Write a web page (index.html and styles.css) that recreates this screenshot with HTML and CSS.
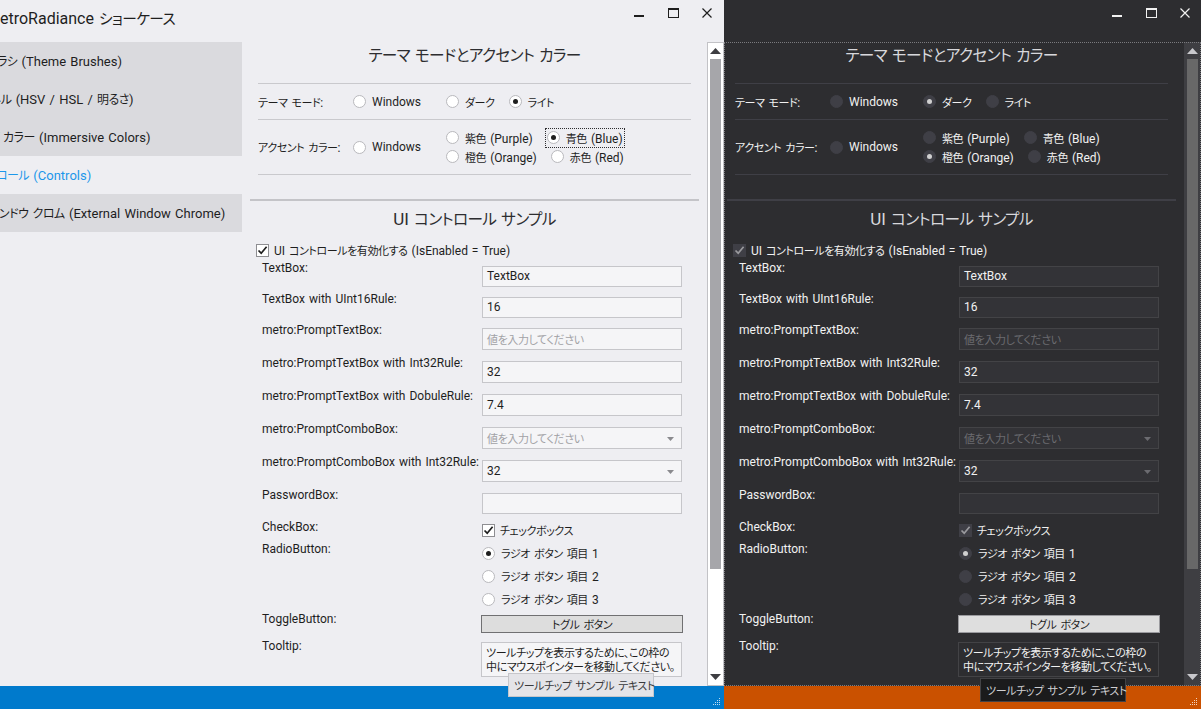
FILE: index.html
```html
<!DOCTYPE html>
<html lang="ja">
<head>
<meta charset="utf-8">
<title>MetroRadiance ショーケース</title>
<link rel="stylesheet" href="styles.css">
</head>
<body>
<div class="desk">
  <!-- LIGHT WINDOW -->
  <div class="win light">
    <div class="titlebar">
      <div class="title">MetroRadiance <span class="ja">ショーケース</span></div>
      <div class="caps">
        <div class="cap"><svg width="10" height="10" viewBox="0 0 10 10"><rect x="0" y="7" width="10" height="2" fill="currentColor"/></svg></div>
        <div class="cap"><svg width="11" height="10" viewBox="0 0 11 10"><rect x="0.5" y="1" width="10" height="8.5" fill="none" stroke="currentColor"/><rect x="0" y="0" width="11" height="2" fill="currentColor"/></svg></div>
        <div class="cap"><svg width="10" height="10" viewBox="0 0 10 10"><path d="M0.5 0.5L9.5 9.5M9.5 0.5L0.5 9.5" stroke="currentColor" stroke-width="1.2" fill="none"/></svg></div>
      </div>
    </div>
    <div class="body">
      <nav class="side">
        <div class="nav-item"><span class="nt n1"><span class="ja">テーマ ブラシ</span> (Theme Brushes)</span></div>
        <div class="nav-item"><span class="nt n2"><span class="ja">カラー パネル</span> (HSV / HSL / <span class="ja">明るさ</span>)</span></div>
        <div class="nav-item"><span class="nt n3"><span class="ja">イマーシブ カラー</span> (Immersive Colors)</span></div>
        <div class="nav-item sel"><span class="nt n4">UI <span class="ja">コントロール</span> (Controls)</span></div>
        <div class="nav-item"><span class="nt n5"><span class="ja">外部ウィンドウ クロム</span> (External Window Chrome)</span></div>
      </nav>
      <div class="main">
        <div class="pane">
          <section class="sec1">
            <h2 class="sec-title"><span class="ja">テーマ モードとアクセント カラー</span></h2>
            <div class="rule"></div>
            <div class="opt-row r1">
              <span class="opt-label"><span class="ja">テーマ モード</span>:</span>
              <span class="radio col1"><i class="rb"></i><span class="rt">Windows</span></span>
              <span class="radio"><i class="rb"></i><span class="rt"><span class="ja">ダーク</span></span></span>
              <span class="radio on"><i class="rb"></i><span class="rt"><span class="ja">ライト</span></span></span>
            </div>
            <div class="rule"></div>
            <div class="opt-row r2">
              <span class="opt-label"><span class="ja">アクセント カラー</span>:</span>
              <span class="radio col1"><i class="rb"></i><span class="rt">Windows</span></span>
              <div class="accents">
                <div class="acc-line">
                  <span class="radio"><i class="rb"></i><span class="rt"><span class="ja">紫色</span> (Purple)</span></span>
                  <span class="radio on focus"><i class="rb"></i><span class="rt"><span class="ja">青色</span> (Blue)</span></span>
                </div>
                <div class="acc-line">
                  <span class="radio"><i class="rb"></i><span class="rt"><span class="ja">橙色</span> (Orange)</span></span>
                  <span class="radio"><i class="rb"></i><span class="rt"><span class="ja">赤色</span> (Red)</span></span>
                </div>
              </div>
            </div>
            <div class="rule"></div>
          </section>
          <div class="sec2-rule"></div>
          <h2 class="sec-title sec2-title">UI <span class="ja">コントロール サンプル</span></h2>
          <div class="enable"><i class="cb"><svg width="11" height="11" viewBox="0 0 11 11"><path d="M1.5 5.5L4.2 8.2L9.6 1.8" fill="none" stroke="currentColor" stroke-width="1.7"/></svg></i><span class="rt">UI <span class="ja">コントロールを有効化する</span> (IsEnabled = True)</span></div>
          <div class="form">
            <div class="frow p31"><span class="lbl">TextBox:</span><div class="ctl tb">TextBox</div></div>
            <div class="frow p31"><span class="lbl">TextBox with UInt16Rule:</span><div class="ctl tb">16</div></div>
            <div class="frow p33"><span class="lbl">metro:PromptTextBox:</span><div class="ctl tb h22 ph"><span class="ja">値を入力してください</span></div></div>
            <div class="frow p33"><span class="lbl">metro:PromptTextBox with Int32Rule:</span><div class="ctl tb h22">32</div></div>
            <div class="frow p33"><span class="lbl">metro:PromptTextBox with DobuleRule:</span><div class="ctl tb h22">7.4</div></div>
            <div class="frow p33"><span class="lbl">metro:PromptComboBox:</span><div class="ctl tb h22 combo ph"><span class="ja">値を入力してください</span><svg class="arr" width="7" height="4" viewBox="0 0 7 4"><path d="M0 0H7L3.5 4Z" fill="currentColor"/></svg></div></div>
            <div class="frow p33"><span class="lbl">metro:PromptComboBox with Int32Rule:</span><div class="ctl tb h22 combo">32<svg class="arr" width="7" height="4" viewBox="0 0 7 4"><path d="M0 0H7L3.5 4Z" fill="currentColor"/></svg></div></div>
            <div class="frow p32"><span class="lbl">PasswordBox:</span><div class="ctl tb"></div></div>
            <div class="frow cbrow"><span class="lbl">CheckBox:</span><div class="ctl chk"><i class="cb"><svg width="11" height="11" viewBox="0 0 11 11"><path d="M1.5 5.5L4.2 8.2L9.6 1.8" fill="none" stroke="currentColor" stroke-width="1.7"/></svg></i><span class="rt"><span class="ja">チェックボックス</span></span></div></div>
            <div class="frow rbrow"><span class="lbl">RadioButton:</span>
              <div class="ctl rlist">
                <span class="radio on"><i class="rb"></i><span class="rt"><span class="ja">ラジオ ボタン 項目</span> 1</span></span>
                <span class="radio"><i class="rb"></i><span class="rt"><span class="ja">ラジオ ボタン 項目</span> 2</span></span>
                <span class="radio"><i class="rb"></i><span class="rt"><span class="ja">ラジオ ボタン 項目</span> 3</span></span>
              </div>
            </div>
            <div class="frow tgrow"><span class="lbl">ToggleButton:</span><div class="ctl toggle"><span class="ja">トグル ボタン</span></div></div>
            <div class="frow ttrow"><span class="lbl">Tooltip:</span><div class="ctl ttbox"><span class="ja">ツールチップを表示するために、この枠の<br>中にマウスポインターを移動してください。</span></div></div>
          </div>
        </div>
        <div class="vscroll">
          <div class="sb-btn"><svg width="11" height="6" viewBox="0 0 11 6"><path d="M5.5 0L11 6H0Z" fill="currentColor"/></svg></div>
          <div class="sb-track"><div class="sb-thumb"></div></div>
          <div class="sb-btn"><svg width="11" height="6" viewBox="0 0 11 6"><path d="M0 0H11L5.5 6Z" fill="currentColor"/></svg></div>
        </div>
      </div>
    </div>
    <div class="status">
      <svg class="grip" width="7" height="7" viewBox="0 0 7 7"><g fill="currentColor"><rect x="6" y="0" width="1" height="1"/><rect x="4" y="2" width="1" height="1"/><rect x="6" y="2" width="1" height="1"/><rect x="2" y="4" width="1" height="1"/><rect x="4" y="4" width="1" height="1"/><rect x="6" y="4" width="1" height="1"/><rect x="0" y="6" width="1" height="1"/><rect x="2" y="6" width="1" height="1"/><rect x="4" y="6" width="1" height="1"/><rect x="6" y="6" width="1" height="1"/></g></svg>
    </div>
    <div class="tip"><span class="ja">ツールチップ サンプル テキスト</span></div>
  </div>

  <!-- DARK WINDOW -->
  <div class="win dark">
    <div class="titlebar">
      <div class="title"></div>
      <div class="caps">
        <div class="cap"><svg width="10" height="10" viewBox="0 0 10 10"><rect x="0" y="7" width="10" height="2" fill="currentColor"/></svg></div>
        <div class="cap"><svg width="11" height="10" viewBox="0 0 11 10"><rect x="0.5" y="1" width="10" height="8.5" fill="none" stroke="currentColor"/><rect x="0" y="0" width="11" height="2" fill="currentColor"/></svg></div>
        <div class="cap"><svg width="10" height="10" viewBox="0 0 10 10"><path d="M0.5 0.5L9.5 9.5M9.5 0.5L0.5 9.5" stroke="currentColor" stroke-width="1.2" fill="none"/></svg></div>
      </div>
    </div>
    <div class="body">
      <div class="main">
        <div class="pane">
          <section class="sec1">
            <h2 class="sec-title"><span class="ja">テーマ モードとアクセント カラー</span></h2>
            <div class="rule"></div>
            <div class="opt-row r1">
              <span class="opt-label"><span class="ja">テーマ モード</span>:</span>
              <span class="radio col1"><i class="rb"></i><span class="rt">Windows</span></span>
              <span class="radio on"><i class="rb"></i><span class="rt"><span class="ja">ダーク</span></span></span>
              <span class="radio"><i class="rb"></i><span class="rt"><span class="ja">ライト</span></span></span>
            </div>
            <div class="rule"></div>
            <div class="opt-row r2">
              <span class="opt-label"><span class="ja">アクセント カラー</span>:</span>
              <span class="radio col1"><i class="rb"></i><span class="rt">Windows</span></span>
              <div class="accents">
                <div class="acc-line">
                  <span class="radio"><i class="rb"></i><span class="rt"><span class="ja">紫色</span> (Purple)</span></span>
                  <span class="radio"><i class="rb"></i><span class="rt"><span class="ja">青色</span> (Blue)</span></span>
                </div>
                <div class="acc-line">
                  <span class="radio on"><i class="rb"></i><span class="rt"><span class="ja">橙色</span> (Orange)</span></span>
                  <span class="radio"><i class="rb"></i><span class="rt"><span class="ja">赤色</span> (Red)</span></span>
                </div>
              </div>
            </div>
            <div class="rule"></div>
          </section>
          <div class="sec2-rule"></div>
          <h2 class="sec-title sec2-title">UI <span class="ja">コントロール サンプル</span></h2>
          <div class="enable"><i class="cb"><svg width="11" height="11" viewBox="0 0 11 11"><path d="M1.5 5.5L4.2 8.2L9.6 1.8" fill="none" stroke="currentColor" stroke-width="1.7"/></svg></i><span class="rt">UI <span class="ja">コントロールを有効化する</span> (IsEnabled = True)</span></div>
          <div class="form">
            <div class="frow p31"><span class="lbl">TextBox:</span><div class="ctl tb">TextBox</div></div>
            <div class="frow p31"><span class="lbl">TextBox with UInt16Rule:</span><div class="ctl tb">16</div></div>
            <div class="frow p33"><span class="lbl">metro:PromptTextBox:</span><div class="ctl tb h22 ph"><span class="ja">値を入力してください</span></div></div>
            <div class="frow p33"><span class="lbl">metro:PromptTextBox with Int32Rule:</span><div class="ctl tb h22">32</div></div>
            <div class="frow p33"><span class="lbl">metro:PromptTextBox with DobuleRule:</span><div class="ctl tb h22">7.4</div></div>
            <div class="frow p33"><span class="lbl">metro:PromptComboBox:</span><div class="ctl tb h22 combo ph"><span class="ja">値を入力してください</span><svg class="arr" width="7" height="4" viewBox="0 0 7 4"><path d="M0 0H7L3.5 4Z" fill="currentColor"/></svg></div></div>
            <div class="frow p33"><span class="lbl">metro:PromptComboBox with Int32Rule:</span><div class="ctl tb h22 combo">32<svg class="arr" width="7" height="4" viewBox="0 0 7 4"><path d="M0 0H7L3.5 4Z" fill="currentColor"/></svg></div></div>
            <div class="frow p32"><span class="lbl">PasswordBox:</span><div class="ctl tb"></div></div>
            <div class="frow cbrow"><span class="lbl">CheckBox:</span><div class="ctl chk"><i class="cb"><svg width="11" height="11" viewBox="0 0 11 11"><path d="M1.5 5.5L4.2 8.2L9.6 1.8" fill="none" stroke="currentColor" stroke-width="1.7"/></svg></i><span class="rt"><span class="ja">チェックボックス</span></span></div></div>
            <div class="frow rbrow"><span class="lbl">RadioButton:</span>
              <div class="ctl rlist">
                <span class="radio on"><i class="rb"></i><span class="rt"><span class="ja">ラジオ ボタン 項目</span> 1</span></span>
                <span class="radio"><i class="rb"></i><span class="rt"><span class="ja">ラジオ ボタン 項目</span> 2</span></span>
                <span class="radio"><i class="rb"></i><span class="rt"><span class="ja">ラジオ ボタン 項目</span> 3</span></span>
              </div>
            </div>
            <div class="frow tgrow"><span class="lbl">ToggleButton:</span><div class="ctl toggle"><span class="ja">トグル ボタン</span></div></div>
            <div class="frow ttrow"><span class="lbl">Tooltip:</span><div class="ctl ttbox"><span class="ja">ツールチップを表示するために、この枠の<br>中にマウスポインターを移動してください。</span></div></div>
          </div>
        </div>
        <div class="vscroll">
          <div class="sb-btn"><svg width="11" height="6" viewBox="0 0 11 6"><path d="M5.5 0L11 6H0Z" fill="currentColor"/></svg></div>
          <div class="sb-track"><div class="sb-thumb"></div></div>
          <div class="sb-btn"><svg width="11" height="6" viewBox="0 0 11 6"><path d="M0 0H11L5.5 6Z" fill="currentColor"/></svg></div>
        </div>
      </div>
    </div>
    <div class="status">
      <svg class="grip" width="7" height="7" viewBox="0 0 7 7"><g fill="currentColor"><rect x="6" y="0" width="1" height="1"/><rect x="4" y="2" width="1" height="1"/><rect x="6" y="2" width="1" height="1"/><rect x="2" y="4" width="1" height="1"/><rect x="4" y="4" width="1" height="1"/><rect x="6" y="4" width="1" height="1"/><rect x="0" y="6" width="1" height="1"/><rect x="2" y="6" width="1" height="1"/><rect x="4" y="6" width="1" height="1"/><rect x="6" y="6" width="1" height="1"/></g></svg>
    </div>
    <div class="tip"><span class="ja">ツールチップ サンプル テキスト</span></div>
  </div>
</div>
</body>
</html>
```

FILE: styles.css
```css
* { box-sizing: border-box; }
html, body { margin: 0; padding: 0; }
body {
  width: 1201px;
  height: 709px;
  overflow: hidden;
  font-family: Roboto, "Noto Sans CJK JP", sans-serif;
  font-size: 12px;
  font-feature-settings: "palt";
  word-spacing: 1px;
  background: #2d2d30;
}
.ja {
  font-family: "Noto Sans CJK JP", sans-serif;
  font-size: 0.92em;
  letter-spacing: -0.04em;
  word-spacing: 2px;
  font-feature-settings: "palt";
}
.desk { display: flex; height: 709px; }

.win { position: relative; display: flex; flex-direction: column; height: 709px; overflow: hidden; flex: none; }
.win.light { width: 724px; background: #eeeef2; color: #1e1e1e; }
.win.dark { width: 477px; background: #2d2d30; color: #f1f1f1; }

/* title bar */
.titlebar { height: 42px; flex: none; display: flex; align-items: flex-start; }
.title { flex: 1; font-size: 16px; line-height: 36px; margin-left: -14px; white-space: nowrap; }
.caps { display: flex; }
.cap { width: 34px; height: 26px; display: flex; align-items: center; justify-content: center; }
.dark .caps { margin-right: -1px; }

/* body */
.body { flex: 1; min-height: 0; display: flex; position: relative; }
.dark .body { overflow: hidden; }
.dark .body::after {
  content: ""; position: absolute; inset: 0;
  border: 1px dotted #7a7a7e; pointer-events: none;
}

/* sidebar */
.side { width: 242px; flex: none; overflow: hidden; }
.nav-item { height: 38px; line-height: 38px; font-size: 13px; white-space: nowrap; overflow: hidden; background: #dadade; }
.nav-item.sel { background: transparent; color: #1c97ea; }
.nt { display: inline-block; }
.n1 { margin-left: -49px; }
.n2 { margin-left: -57px; }
.n3 { margin-left: -53px; }
.n4 { margin-left: -50px; }
.n5 { margin-left: -43px; }

/* main pane */
.main { width: 482px; flex: none; display: flex; }
.dark .main { margin-left: -5px; }
.pane { width: 465px; flex: none; overflow: hidden; }

.sec1 { padding: 0 16px; }
.sec-title { margin: 0; height: 26px; line-height: 26px; text-align: center; font-size: 17px; font-weight: normal; white-space: nowrap; }
.light .sec-title { color: #2d2d30; }
.dark .sec-title { color: #d8d8dc; }
.sec1 .sec-title { margin-bottom: 15px; }
.rule { height: 1px; background: #c9c9cd; }
.dark .rule { background: #3f3f46; }

.opt-row { display: flex; align-items: center; }
.opt-row.r1 { height: 35px; }
.opt-row.r2 { height: 54px; }
.opt-label { width: 95px; flex: none; white-space: nowrap; }

.radio { display: flex; align-items: center; white-space: nowrap; height: 16px; margin-right: 14px; }
.radio.col1 { width: 93px; margin-right: 0; flex: none; }
.rt { white-space: nowrap; }
.rb { width: 13px; height: 13px; border-radius: 50%; border: 1px solid #b9b9bd; background: #ffffff; margin-right: 6px; flex: none; position: relative; }
.radio.on .rb::after {
  content: ""; position: absolute; left: 3px; top: 3px; width: 5px; height: 5px; border-radius: 50%; background: #1e1e1e;
}
.dark .rb { border-color: #3f3f46; background: #3f3f46; }
.dark .radio.on .rb::after { background: #d0d0d0; }
.radio.focus { outline: 1px dotted #2d2d30; outline-offset: 1px; }

.accents { display: flex; flex-direction: column; gap: 3px; }
.acc-line { display: flex; }

/* section 2 */
.sec2-rule { height: 2px; background: #c4c4c8; margin: 24px 8px 0; }
.dark .sec2-rule { background: #3f3f46; }
.sec2-title { margin-top: 5px; }

.enable { display: flex; align-items: center; height: 16px; margin: 10px 0 0 14px; white-space: nowrap; }
.cb { width: 13px; height: 13px; border: 1px solid #8e8e92; background: #ffffff; margin-right: 5px; flex: none; display: flex; align-items: center; justify-content: center; color: #1e1e1e; }
.dark .cb { border-color: #3f3f46; background: #3f3f46; color: #9a9a9e; }

.form { margin-top: 2px; padding-left: 20px; }
.frow { display: grid; grid-template-columns: 220px 200px; align-items: start; }
.frow.p31 { height: 31px; }
.frow.p32 { height: 32px; }
.frow.p33 { height: 33px; }
.frow.cbrow { height: 22px; }
.frow.rbrow { height: 70px; }
.frow.tgrow { height: 27px; }
.lbl { line-height: 16px; white-space: nowrap; }
.ctl { margin-top: 6px; }

.tb { height: 21px; line-height: 19px; border: 1px solid #c6c6ca; background: #f5f5f7; padding: 0 4px; white-space: nowrap; overflow: hidden; position: relative; }
.tb.h22 { height: 22px; line-height: 20px; }
.tb.ph { color: #a2a2a6; }
.dark .tb { border-color: #434346; background: #333337; }
.dark .tb.ph { color: #6b6b70; }
.combo .arr { position: absolute; right: 7px; top: 9px; color: #8a8a8e; }
.dark .combo .arr { color: #6b6b70; }

.chk { margin-top: 3px; display: flex; align-items: center; height: 16px; white-space: nowrap; }
.rlist { margin-top: 4px; display: flex; flex-direction: column; gap: 7px; }

.toggle { margin-top: 4px; margin-left: -1px; width: 202px; height: 18px; line-height: 16px; text-align: center; border: 1px solid #707072; background: #dddddd; color: #1e1e1e; }
.dark .toggle { border-color: #9a9a9e; background: #dedede; }

.ttbox { margin-top: 4px; margin-left: -1px; width: 201px; height: 35px; border: 1px solid #c6c6ca; background: #f5f5f7; padding: 3px 4px 0; line-height: 13px; white-space: nowrap; overflow: hidden; }
.dark .ttbox { border-color: #434346; background: #2d2d30; }

/* scrollbar */
.vscroll { width: 17px; flex: none; display: flex; flex-direction: column; border: 1px solid #c2c2c6; background: #ffffff; color: #3e3e42; }
.sb-btn { height: 16px; flex: none; display: flex; align-items: center; justify-content: center; }
.sb-track { flex: 1; min-height: 0; }
.sb-thumb { height: 510px; margin: 0 2px; background: #a6a6aa; }
.dark .vscroll { border-color: #3e3e42; background: #3e3e42; color: #c8c8cc; border-right-color: #2d2d30; }
.dark .sb-thumb { background: #686868; }

/* status bar */
.status { height: 23px; flex: none; display: flex; justify-content: flex-end; align-items: flex-end; }
.light .status { background: #007acc; color: rgba(255,255,255,0.75); }
.dark .status { background: #ca5100; color: rgba(255,255,255,0.75); }
.grip { margin: 0 4px 4px 0; }

/* tooltip popup */
.tip { position: absolute; height: 24px; line-height: 22px; padding: 0 5px; white-space: nowrap; border: 1px solid #c6c6ca; background: #e4e4e8; color: #3a3a3c; }
.light .tip { left: 508px; top: 673px; width: 146px; }
.dark .tip { left: 256px; top: 678px; width: 146px; border-color: #434346; background: #1b1b1c; color: #cfcfd2; }
```
